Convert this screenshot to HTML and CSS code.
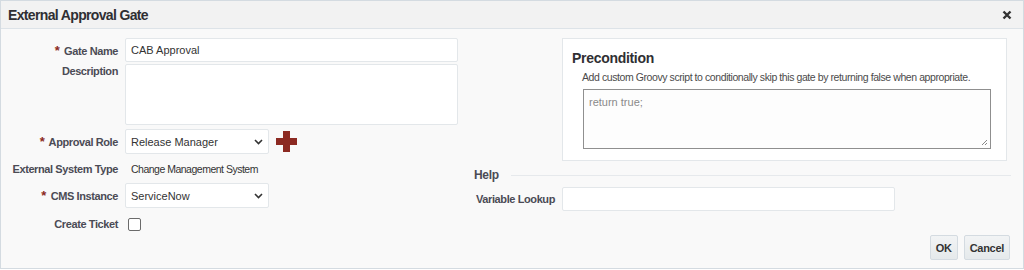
FILE: index.html
```html
<!DOCTYPE html>
<html lang="en">
<head>
    <meta charset="UTF-8">
    <title>External Approval Gate</title>
    <link rel="stylesheet" href="styles.css">
</head>
<body>

    <div class="dialog">
        <div class="dialog-header">
            <span class="dialog-title">External Approval Gate</span>
            <svg class="dialog-close" width="10" height="10" viewBox="0 0 10 10">
                <path d="M1.5 1.5l7 7M8.5 1.5l-7 7" stroke="#333" stroke-width="2.4"/>
            </svg>
        </div>

        <div class="dialog-body">
            <!-- Left: gate fields -->
            <div class="form-col">
                <div class="row row-gate">
                    <label class="lbl"><span class="req">*</span> Gate Name</label>
                    <div class="field text-input wide">CAB Approval</div>
                </div>
                <div class="row row-desc">
                    <label class="lbl">Description</label>
                    <div class="field text-area wide"></div>
                </div>
                <div class="row row-role">
                    <label class="lbl"><span class="req">*</span> Approval Role</label>
                    <div class="field select">
                        <span>Release Manager</span>
                        <svg class="chev" width="9" height="6" viewBox="0 0 9 6"><path d="M1 1l3.5 3.5L8 1" fill="none" stroke="#333" stroke-width="1.6"/></svg>
                    </div>
                    <svg class="add-icon" width="21" height="21" viewBox="0 0 21 21">
                        <path d="M7 0h7v7h7v7h-7v7H7v-7H0V7h7z" fill="#8c2a22"/>
                    </svg>
                </div>
                <div class="row row-type">
                    <label class="lbl">External System Type</label>
                    <span class="value">Change Management System</span>
                </div>
                <div class="row row-cms">
                    <label class="lbl"><span class="req">*</span> CMS Instance</label>
                    <div class="field select">
                        <span>ServiceNow</span>
                        <svg class="chev" width="9" height="6" viewBox="0 0 9 6"><path d="M1 1l3.5 3.5L8 1" fill="none" stroke="#333" stroke-width="1.6"/></svg>
                    </div>
                </div>
                <div class="row row-ticket">
                    <label class="lbl">Create Ticket</label>
                    <span class="checkbox"></span>
                </div>
            </div>

            <!-- Right: precondition and help -->
            <div class="side-col">
                <div class="precondition">
                    <h3>Precondition</h3>
                    <p>Add custom Groovy script to conditionally skip this gate by returning false when appropriate.</p>
                    <div class="script-box">
                        return true;
                        <svg class="grip" width="7" height="7" viewBox="0 0 7 7"><path d="M6 1L1 6M6 4L4 6" stroke="#888" stroke-width="1"/></svg>
                    </div>
                </div>

                <div class="help-head">
                    <span>Help</span>
                    <span class="help-line"></span>
                </div>
                <div class="row row-lookup">
                    <label class="lbl lbl-side">Variable Lookup</label>
                    <div class="field text-input lookup"></div>
                </div>

                <div class="actions">
                    <button class="btn">OK</button>
                    <button class="btn">Cancel</button>
                </div>
            </div>
        </div>
    </div>

</body>
</html>
```

FILE: styles.css
```css
/* General Styles */
body {
    margin: 0;
    padding: 0;
    font-family: 'Liberation Sans', Arial, sans-serif;
    font-size: 11px;
    color: #333;
    background: #ffffff;
}

/* Dialog frame */
.dialog {
    width: 1022px;
    height: 267px;
    border: 1px solid #d4dbe1;
    background: #f9f9f9;
    display: flex;
    flex-direction: column;
}

.dialog-header {
    height: 27px;
    display: flex;
    align-items: center;
    justify-content: space-between;
    padding: 0 11px 0 7px;
    background: #f2f2f2;
    border-bottom: 1px solid #dde3e8;
}

.dialog-title {
    font-size: 14px;
    font-weight: bold;
    letter-spacing: -0.65px;
    color: #2f2f33;
}

.dialog-body {
    flex: 1;
    display: flex;
}

/* Left column */
.form-col {
    width: 458px;
    padding-top: 9px;
}

.row {
    display: flex;
    align-items: flex-start;
}

.lbl {
    width: 124px;
    padding-right: 7px;
    box-sizing: border-box;
    text-align: right;
    font-weight: bold;
    letter-spacing: -0.4px;
    white-space: nowrap;
    color: #4b4b55;
    flex-shrink: 0;
}

.req {
    color: #8c2a22;
    font-size: 13px;
    margin-right: 2px;
}

.field {
    background: #fff;
    border: 1px solid #e3e7ea;
    border-radius: 2px;
    box-sizing: border-box;
}

.text-input {
    height: 24px;
    line-height: 22px;
    padding-left: 5px;
}

.wide {
    width: 333px;
}

.row-gate .lbl { padding-top: 5px; }

.row-desc {
    margin-top: 2px;
}

.row-desc .lbl { padding-top: 1px; }

.text-area {
    height: 61px;
}

.row-role {
    margin-top: 4px;
    align-items: center;
}

.select {
    width: 144px;
    height: 25px;
    display: flex;
    align-items: center;
    justify-content: space-between;
    padding: 0 5px 0 5px;
}

.add-icon {
    margin-left: 7px;
}

.row-type {
    margin-top: 9px;
}

.value {
    padding-left: 6px;
    font-size: 10.5px;
    letter-spacing: -0.5px;
}

.row-cms {
    margin-top: 8px;
    align-items: center;
}

.row-ticket {
    margin-top: 8px;
    align-items: center;
}

.checkbox {
    width: 11px;
    height: 11px;
    margin-left: 3px;
    margin-top: 2px;
    border: 1px solid #6b6b6b;
    border-radius: 2px;
    background: #fff;
}

/* Right column */
.side-col {
    flex: 1;
    padding: 9px 12px 0 14px;
    display: flex;
    flex-direction: column;
}

.precondition {
    margin-left: 89px;
    width: 445px;
    height: 123px;
    box-sizing: border-box;
    background: #fff;
    border: 1px solid #e3e7ea;
    padding: 11px 15px 0 9px;
}

.precondition h3 {
    margin: 0;
    font-size: 14px;
    font-weight: bold;
    letter-spacing: -0.3px;
    color: #2f2f33;
}

.precondition p {
    margin: 5px 0 0 10px;
    white-space: nowrap;
    font-size: 10.5px;
    letter-spacing: -0.42px;
    color: #4b4b4b;
}

.script-box {
    position: relative;
    margin: 6px 0 0 11px;
    height: 60px;
    box-sizing: border-box;
    border: 1px solid #8f8f8f;
    background: #fdfdfd;
    padding: 6px 5px;
    color: #8a8a8a;
}

.grip {
    position: absolute;
    right: 2px;
    bottom: 2px;
}

.help-head {
    display: flex;
    align-items: center;
    margin-top: 7px;
    margin-left: 1px;
    font-size: 12px;
    font-weight: bold;
    letter-spacing: -0.3px;
    color: #4b4b55;
}

.help-line {
    flex: 1;
    height: 1px;
    background: #e6e9ec;
    margin-left: 12px;
}

.row-lookup {
    margin-top: 5px;
    align-items: center;
}

.lbl-side {
    width: 89px;
}

.lookup {
    width: 333px;
}

.actions {
    margin-top: 24px;
    display: flex;
    justify-content: flex-end;
    gap: 6px;
    padding-right: 1px;
}

.btn {
    height: 25px;
    padding: 0 5px;
    font-family: inherit;
    font-size: 11px;
    font-weight: bold;
    letter-spacing: -0.3px;
    color: #333;
    background: linear-gradient(#f2f4f5, #e5e9eb);
    border: 1px solid #d4dbe1;
    border-radius: 2px;
}
```
